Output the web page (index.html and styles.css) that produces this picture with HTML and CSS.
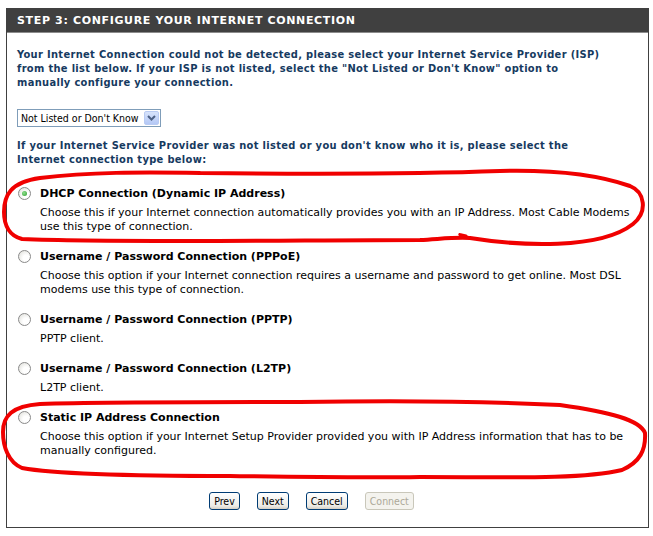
FILE: index.html
```html
<!DOCTYPE html>
<html>
<head>
<meta charset="utf-8">
<link rel="stylesheet" href="styles.css">
</head>
<body>
<div class="panel">
  <div class="panel-head">STEP 3: CONFIGURE YOUR INTERNET CONNECTION</div>
  <div class="panel-body">
    <p class="lead">Your Internet Connection could not be detected, please select your Internet Service Provider (ISP) from the list below. If your ISP is not listed, select the "Not Listed or Don't Know" option to manually configure your connection.</p>
    <div class="select">
      <span class="select-text">Not Listed or Don't Know</span>
      <span class="select-btn">
        <svg width="9" height="6" viewBox="0 0 9 6"><path d="M1 1 L4.5 4.5 L8 1" fill="none" stroke="#4d6185" stroke-width="2"/></svg>
      </span>
    </div>
    <p class="lead lead2">If your Internet Service Provider was not listed or you don't know who it is, please select the Internet connection type below:</p>
    <div class="options">
      <div class="opt">
        <span class="radio checked"></span>
        <div class="opt-text">
          <div class="opt-title">DHCP Connection (Dynamic IP Address)</div>
          <div class="opt-desc">Choose this if your Internet connection automatically provides you with an IP Address. Most Cable Modems use this type of connection.</div>
        </div>
      </div>
      <div class="opt">
        <span class="radio"></span>
        <div class="opt-text">
          <div class="opt-title">Username / Password Connection (PPPoE)</div>
          <div class="opt-desc">Choose this option if your Internet connection requires a username and password to get online. Most DSL modems use this type of connection.</div>
        </div>
      </div>
      <div class="opt">
        <span class="radio"></span>
        <div class="opt-text">
          <div class="opt-title">Username / Password Connection (PPTP)</div>
          <div class="opt-desc">PPTP client.</div>
        </div>
      </div>
      <div class="opt">
        <span class="radio"></span>
        <div class="opt-text">
          <div class="opt-title">Username / Password Connection (L2TP)</div>
          <div class="opt-desc">L2TP client.</div>
        </div>
      </div>
      <div class="opt">
        <span class="radio"></span>
        <div class="opt-text">
          <div class="opt-title">Static IP Address Connection</div>
          <div class="opt-desc">Choose this option if your Internet Setup Provider provided you with IP Address information that has to be manually configured.</div>
        </div>
      </div>
    </div>
    <div class="buttons">
      <button class="btn">Prev</button>
      <button class="btn">Next</button>
      <button class="btn">Cancel</button>
      <button class="btn" disabled>Connect</button>
    </div>
  </div>
</div>
<svg class="marks" width="653" height="536" viewBox="0 0 653 536">
  <path d="M200 173 C140 172 90 172 40 178 C10 182 4 196 4 212 C4 226 10 236 22 239 C120 243 300 240 420 240 C440 239 455 237 470 238 C520 246 600 250 633 224 C648 212 645 192 630 186 C590 172 540 170 500 171 C420 174 300 174 200 173" fill="none" stroke="#f00000" stroke-width="4" stroke-linejoin="round" stroke-linecap="round"/>
  <path d="M470 238 C460 235 455 233 466 236" fill="none" stroke="#f00000" stroke-width="3" stroke-linecap="round"/>
  <path d="M300 402 C220 402 100 402 40 404 C12 406 3 416 3 432 C3 446 8 462 22 468 C60 475 150 476 230 476 C300 477 360 478 420 477 C500 477 580 480 622 470 C640 462 646 450 645 433 C640 420 610 412 560 405 C500 402 420 400 300 402" fill="none" stroke="#f00000" stroke-width="4" stroke-linejoin="round" stroke-linecap="round"/>
</svg>
</body>
</html>
```
FILE: styles.css
```css
html, body {
  margin: 0;
  padding: 0;
  background: #ffffff;
}
body {
  width: 653px;
  height: 536px;
  position: relative;
  overflow: hidden;
  font-family: "DejaVu Sans", sans-serif;
}
.panel {
  margin: 8px 0 0 6px;
  width: 641px;
  height: 518px;
  border: 1px solid #404040;
}
.panel-head {
  background: #404040;
  border-bottom: 1px solid #8c8c8c;
  height: 23px;
  line-height: 24px;
  padding-left: 10px;
  color: #ffffff;
  font-family: "DejaVu Sans", sans-serif;
  font-weight: bold;
  font-size: 11px;
  letter-spacing: 0.65px;
}
.panel-body {
  padding: 0 10px;
}
.lead {
  margin: 15px 0 0 0;
  max-width: 592px;
  color: #163a5f;
  font-family: "DejaVu Sans Condensed", "DejaVu Sans", sans-serif;
  font-stretch: condensed;
  font-weight: bold;
  font-size: 11px;
  line-height: 14px;
  letter-spacing: 0.33px;
}
.lead2 {
  margin-top: 12px;
}
.select {
  margin-top: 19px;
  width: 142px;
  height: 16px;
  border: 1px solid #7f9db9;
  display: flex;
  align-items: center;
  justify-content: space-between;
  font-family: "DejaVu Sans Condensed", "DejaVu Sans", sans-serif;
  font-size: 10.5px;
  color: #000;
  font-stretch: condensed;
}
.select-text {
  padding-left: 3px;
  white-space: nowrap;
}
.select-btn {
  width: 15px;
  height: 14px;
  margin-right: 1px;
  background: linear-gradient(#d7e3fb, #b4c8f6);
  border: 1px solid #b9cbf3;
  border-radius: 2px;
  box-sizing: border-box;
  display: flex;
  align-items: center;
  justify-content: center;
}
.options {
  margin-top: 20px;
  display: flex;
  flex-direction: column;
  gap: 16px;
}
.opt {
  display: flex;
  align-items: flex-start;
}
.radio {
  flex: none;
  width: 13px;
  height: 13px;
  margin: 0 9px 0 1px;
  box-sizing: border-box;
  border: 1px solid #8a8a8a;
  border-radius: 50%;
  background: radial-gradient(circle at 65% 65%, #ffffff 30%, #dcdcd6 100%);
  display: flex;
  align-items: center;
  justify-content: center;
}
.radio.checked::after {
  content: "";
  width: 5px;
  height: 5px;
  border-radius: 50%;
  background: radial-gradient(circle at 40% 40%, #8ee08e, #2b9a2b);
}
.opt-text {
  flex: 1;
}
.opt-title {
  font-family: "DejaVu Sans", sans-serif;
  font-weight: bold;
  font-size: 11px;
  line-height: 13px;
  color: #000;
}
.opt-desc {
  margin-top: 6px;
  font-family: "DejaVu Sans", sans-serif;
  font-size: 11px;
  line-height: 14px;
  color: #000;
}
.buttons {
  margin-top: 34px;
  display: flex;
  justify-content: center;
  gap: 17px;
  padding-right: 32px;
}
.btn {
  height: 18px;
  padding: 0 4px;
  border: 1px solid #003c74;
  border-radius: 3px;
  background: linear-gradient(#ffffff, #ecebe6 80%, #d6d0c5);
  font-family: "DejaVu Sans Condensed", "DejaVu Sans", sans-serif;
  font-stretch: condensed;
  font-size: 10.5px;
  color: #000;
  line-height: 14px;
}
.btn:disabled {
  border-color: #c9c7ba;
  color: #aca899;
  background: #f4f3ee;
}
.marks {
  position: absolute;
  left: 0;
  top: 0;
  pointer-events: none;
}
```
